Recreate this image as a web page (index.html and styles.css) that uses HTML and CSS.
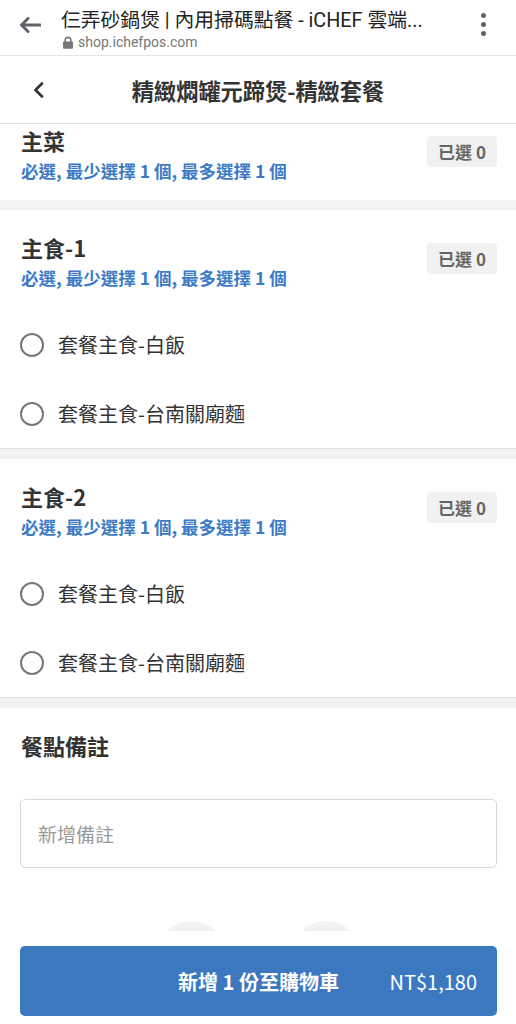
FILE: index.html
```html
<html lang="zh-Hant">
  <head>
    <meta name="viewport" content="width=device-width, initial-scale=1">
    <link rel="stylesheet" href="styles.css">
  </head>
  <body>
    <div class="browser-bar">
      <svg class="browser-back" width="22" height="16" viewBox="0 0 22 16">
        <path d="M21 8H3M9 1.5L2.5 8 9 14.5" fill="none" stroke="#5f6368" stroke-width="3" stroke-linecap="round" stroke-linejoin="round"/>
      </svg>
      <div class="tab-info">
        <div class="tab-title">仨弄砂鍋煲 | 內用掃碼點餐 - iCHEF 雲端...</div>
        <div class="tab-url">
          <svg width="12" height="13" viewBox="0 0 12 13">
            <path d="M3.2 6V4.2a2.8 2.8 0 0 1 5.6 0V6" fill="none" stroke="#777" stroke-width="1.6"/>
            <rect x="1" y="5.6" width="10" height="7.2" rx="1" fill="#777"/>
          </svg>
          shop.ichefpos.com
        </div>
      </div>
      <div class="kebab"><span></span><span></span><span></span></div>
    </div>

    <div class="page-header">
      <svg class="page-back" width="12" height="16" viewBox="0 0 12 16">
        <path d="M9 1.5L2.5 8 9 14.5" fill="none" stroke="#333" stroke-width="2.6" stroke-linecap="round" stroke-linejoin="round"/>
      </svg>
      <h1>精緻燜罐元蹄煲-精緻套餐</h1>
      <span></span>
    </div>

    <div class="content">
      <div class="content-scroll">
        <section class="group group-closed">
          <div class="group-head">
            <div>
              <div class="group-title">主菜</div>
              <div class="group-rule">必選, 最少選擇 1 個, 最多選擇 1 個</div>
            </div>
            <span class="badge">已選 0</span>
          </div>
        </section>

        <section class="group">
          <div class="group-head">
            <div>
              <div class="group-title">主食-1</div>
              <div class="group-rule">必選, 最少選擇 1 個, 最多選擇 1 個</div>
            </div>
            <span class="badge">已選 0</span>
          </div>
          <div class="options">
            <label class="option"><span class="radio"></span>套餐主食-白飯</label>
            <label class="option"><span class="radio"></span>套餐主食-台南關廟麵</label>
          </div>
        </section>

        <section class="group">
          <div class="group-head">
            <div>
              <div class="group-title">主食-2</div>
              <div class="group-rule">必選, 最少選擇 1 個, 最多選擇 1 個</div>
            </div>
            <span class="badge">已選 0</span>
          </div>
          <div class="options">
            <label class="option"><span class="radio"></span>套餐主食-白飯</label>
            <label class="option"><span class="radio"></span>套餐主食-台南關廟麵</label>
          </div>
        </section>

        <section class="notes">
          <div class="group-title">餐點備註</div>
          <div class="note-input">新增備註</div>
          <div class="skeleton"><span></span><span></span></div>
        </section>
      </div>
    </div>

    <div class="footer">
      <button class="add-button">
        <span></span>
        <span class="add-label">新增 1 份至購物車</span>
        <span class="add-price">NT$1,180</span>
      </button>
    </div>
  </body>
</html>
```

FILE: styles.css
```css
body {
  margin: 0;
  width: 516px;
  height: 1024px;
  display: flex;
  flex-direction: column;
  background: #fff;
  color: #333;
  font-family: "Noto Sans CJK TC", "Noto Sans", sans-serif;
  overflow: hidden;
}

/* browser chrome */

.browser-bar {
  height: 55px;
  border-bottom: 1px solid #e4e4e4;
  display: flex;
  align-items: flex-start;
  flex-shrink: 0;
}

.browser-back {
  margin: 17px 0 0 19px;
}

.tab-info {
  margin-left: 20px;
  padding-top: 9px;
  flex: 1;
}

.tab-title {
  font-family: Roboto, "Noto Sans CJK TC", sans-serif;
  font-size: 19.8px;
  line-height: 24px;
  color: #222;
  white-space: nowrap;
}

.tab-url {
  display: flex;
  align-items: center;
  gap: 4px;
  margin-left: 1px;
  font-family: Roboto, sans-serif;
  font-size: 14px;
  line-height: 18px;
  color: #777;
}

.kebab {
  display: flex;
  flex-direction: column;
  gap: 4px;
  margin: 13px 30px 0 0;
}

.kebab span {
  width: 5px;
  height: 5px;
  border-radius: 50%;
  background: #5f6368;
}

/* page header */

.page-header {
  height: 67px;
  border-bottom: 1px solid #e0e0e0;
  display: grid;
  grid-template-columns: 1fr auto 1fr;
  align-items: center;
  flex-shrink: 0;
}

.page-back {
  margin-left: 33px;
}

.page-header h1 {
  margin: 0;
  font-size: 22.2px;
  font-weight: 700;
  line-height: 30px;
  color: #333;
}

/* option groups */

.content {
  flex: 1;
  overflow: hidden;
}

.content-scroll {
  margin-top: -21px;
}

.group {
  border-bottom: 10px solid #f2f2f2;
}

.group-head {
  display: flex;
  justify-content: space-between;
  align-items: flex-start;
  padding: 23px 19px 21px 21px;
}

.group-closed .group-head {
  padding-bottom: 18px;
}

.group-title {
  font-size: 22px;
  font-weight: 700;
  line-height: 28px;
  color: #333;
}

.group-rule {
  margin-top: 6px;
  font-size: 17.5px;
  font-weight: 700;
  line-height: 22px;
  color: #3b7bc6;
}

.badge {
  margin-top: 10px;
  padding: 0 11px;
  height: 31px;
  line-height: 31px;
  border-radius: 4px;
  background: #f1f1f1;
  color: #666;
  font-size: 17px;
  font-weight: 700;
}

.options {
  border-bottom: 1px solid #e0e0e0;
}

.option {
  height: 69px;
  display: flex;
  align-items: center;
  padding-left: 20px;
  font-size: 20px;
  color: #333;
}

.radio {
  width: 20px;
  height: 20px;
  border: 2px solid #777;
  border-radius: 50%;
  margin-right: 14px;
  flex-shrink: 0;
}

/* notes */

.notes {
  padding: 23px 19px 0 20px;
}

.notes .group-title {
  margin-left: 1px;
}

.note-input {
  margin-top: 40px;
  height: 67px;
  border: 1px solid #d8d8d8;
  border-radius: 5px;
  padding-left: 17px;
  line-height: 67px;
  font-size: 19px;
  color: #999;
}

.skeleton {
  display: flex;
  justify-content: center;
  gap: 67px;
  margin-top: 53px;
}

.skeleton span {
  width: 68px;
  height: 68px;
  border-radius: 50%;
  background: #f2f2f2;
}

/* footer */

.footer {
  height: 93px;
  padding: 15px 19px 0 20px;
  box-sizing: border-box;
  background: #fff;
  flex-shrink: 0;
}

.add-button {
  width: 100%;
  height: 70px;
  border: none;
  border-radius: 5px;
  background: #3c78bf;
  color: #fff;
  font-family: inherit;
  display: grid;
  grid-template-columns: 1fr auto 1fr;
  align-items: center;
  padding: 0 20px;
}

.add-label {
  font-size: 20px;
  font-weight: 700;
}

.add-price {
  justify-self: end;
  font-size: 20px;
}
```
